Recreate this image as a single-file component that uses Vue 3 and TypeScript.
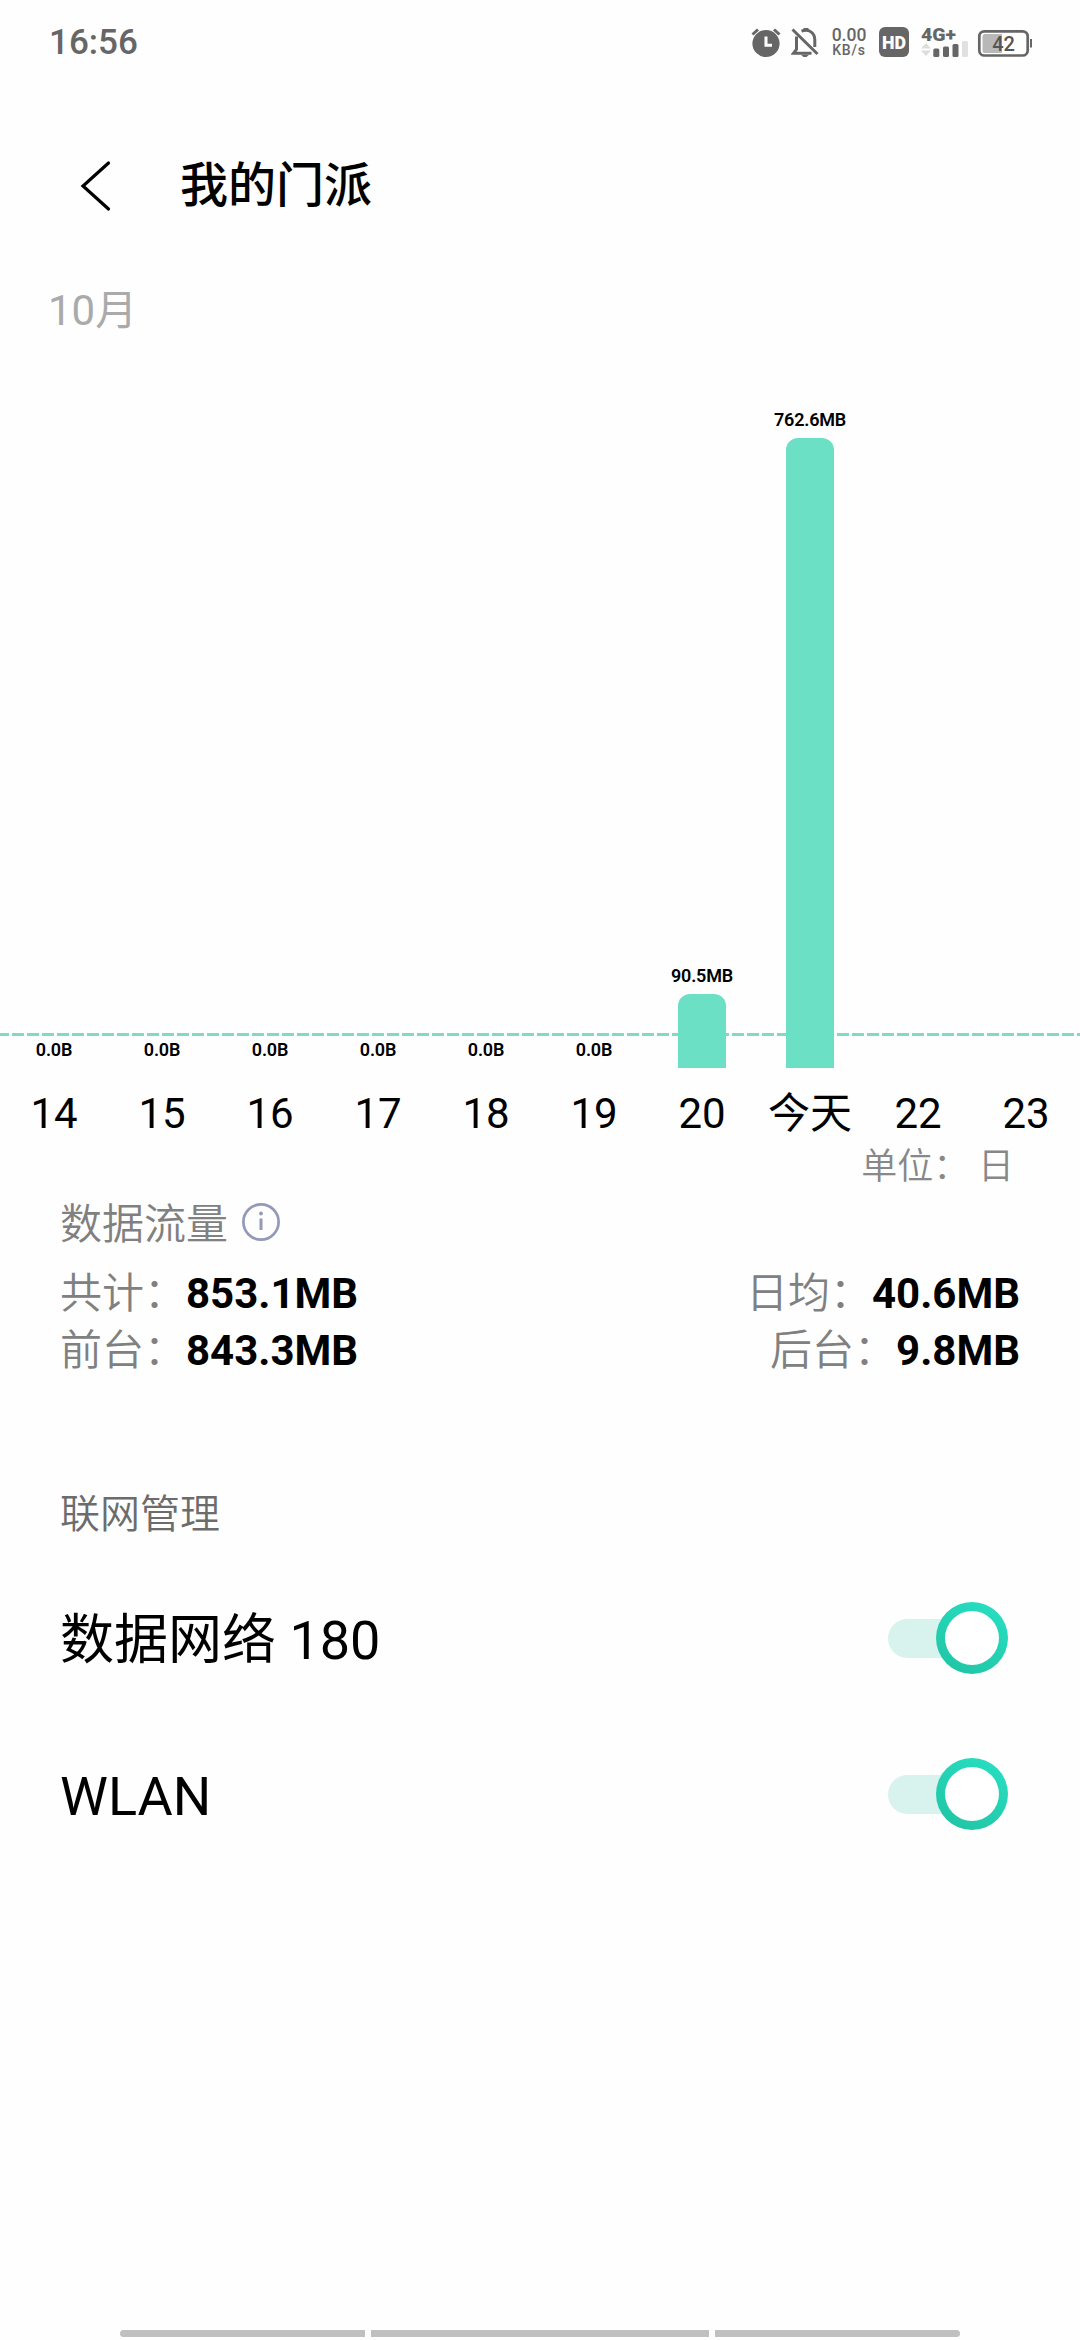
<script setup lang="ts">
import { ref } from 'vue'

interface DayUsage {
  label: string
  value: string
  height: number
}

interface NetworkSwitch {
  label: string
  on: boolean
}

const days: DayUsage[] = [
  { label: '14', value: '0.0B', height: 0 },
  { label: '15', value: '0.0B', height: 0 },
  { label: '16', value: '0.0B', height: 0 },
  { label: '17', value: '0.0B', height: 0 },
  { label: '18', value: '0.0B', height: 0 },
  { label: '19', value: '0.0B', height: 0 },
  { label: '20', value: '90.5MB', height: 74 },
  { label: '今天', value: '762.6MB', height: 630 },
  { label: '22', value: '', height: 0 },
  { label: '23', value: '', height: 0 },
]

const totals = [
  [
    { label: '共计：', value: '853.1MB' },
    { label: '日均：', value: '40.6MB' },
  ],
  [
    { label: '前台：', value: '843.3MB' },
    { label: '后台：', value: '9.8MB' },
  ],
]

const switches = ref<NetworkSwitch[]>([
  { label: '数据网络 180', on: true },
  { label: 'WLAN', on: true },
])
</script>

<template>
  <div class="screen">
    <div class="status">
      <span class="clock">16:56</span>
      <div class="indicators">
        <!-- alarm -->
        <svg class="alarm" width="30" height="40" viewBox="0 0 30 40">
          <circle cx="15" cy="21.5" r="13.6" fill="#666" />
          <path d="M1.5 12.5L7 7.5M28.5 12.5L23 7.5" stroke="#666" stroke-width="3" fill="none" />
          <path d="M15 14.5v8.7h6" stroke="#fff" stroke-width="3" fill="none" />
        </svg>
        <!-- muted bell -->
        <svg class="bell" width="30" height="40" viewBox="0 0 30 40">
          <path d="M5.500 14.500V27.300L2.500 31.200H20.500M10.500 9.200C18 6.300 23.800 11 23.800 18V25" stroke="#666" stroke-width="3" fill="none" />
          <path d="M12.500 8.500h5V6h-5z" fill="#666" />
          <path d="M1.500 7.500L26.500 32" stroke="#666" stroke-width="3" />
          <path d="M10 32.700h8l-2.500 2.300h-3z" fill="#666" />
        </svg>
        <div class="speed">
          <span class="rate">0.00</span>
          <span class="rate-unit">KB/s</span>
        </div>
        <!-- HD badge -->
        <svg class="hd" width="30" height="40" viewBox="0 0 30 40">
          <rect y="5" width="30" height="30" rx="6" fill="#666" />
          <text x="3" y="27" textLength="24" lengthAdjust="spacingAndGlyphs" class="hd-text">HD</text>
        </svg>
        <!-- mobile signal -->
        <svg class="signal" width="51" height="40" viewBox="0 0 51 40">
          <text x="2" y="19" textLength="35" lengthAdjust="spacingAndGlyphs" class="net">4G+</text>
          <path d="M2 26.500L7 21l5 5.500zM2 28.500h10L7 34z" fill="#ddd" />
          <g fill="#666">
            <rect x="14.300" y="26.500" width="6" height="8.500" rx="1.500" />
            <rect x="24" y="24.500" width="6" height="10.500" rx="1.500" />
            <rect x="33.500" y="22" width="6" height="13" rx="1.500" />
          </g>
          <rect x="43" y="19" width="6" height="16" rx="1.500" fill="#e0e0e0" />
        </svg>
        <!-- battery -->
        <svg class="battery" width="58" height="40" viewBox="0 0 58 40">
          <rect x="3.300" y="9.300" width="48.400" height="24.200" rx="5" fill="#fff" stroke="#666" stroke-width="2.700" />
          <path d="M9 12H26V31H9a2.500 2.500 0 0 1-2.500-2.500V14.500A2.500 2.500 0 0 1 9 12z" fill="#b8b8b8" />
          <rect x="54" y="17" width="2" height="8.500" fill="#666" />
          <text x="27.500" y="28.500" class="level">42</text>
        </svg>
      </div>
    </div>

    <header class="header">
      <svg class="back" width="34" height="56" viewBox="0 0 34 56">
        <path d="M30.500 5L5 28l25.500 23" fill="none" stroke="#000" stroke-width="3.200" stroke-linecap="round" />
      </svg>
      <h1 class="title">我的门派</h1>
    </header>

    <div class="month">10月</div>

    <div class="chart">
      <div class="average"></div>
      <div v-for="day in days" :key="day.label" class="column">
        <span class="value">{{ day.value }}</span>
        <div class="bar" :style="{ height: day.height + 'px' }"></div>
      </div>
    </div>
    <div class="axis">
      <span v-for="day in days" :key="day.label" class="tick">{{ day.label }}</span>
    </div>
    <div class="unit">单位： 日</div>

    <section class="usage">
      <div class="usage-title">
        <span>数据流量</span>
        <svg class="info" width="40" height="40" viewBox="0 0 40 40">
          <circle cx="20" cy="20" r="17.600" fill="none" stroke="#9499b8" stroke-width="2.700" />
          <path d="M20 16.500v11.500" stroke="#9499b8" stroke-width="3" />
          <circle cx="20" cy="11.500" r="1.900" fill="#9499b8" />
        </svg>
      </div>
      <div v-for="(row, i) in totals" :key="i" class="usage-row">
        <span v-for="item in row" :key="item.label" class="usage-item">{{ item.label }}<b>{{ item.value }}</b></span>
      </div>
    </section>

    <section class="network">
      <h2 class="network-title">联网管理</h2>
      <div v-for="item in switches" :key="item.label" class="network-row">
        <span class="network-label">{{ item.label }}</span>
        <div class="switch" role="switch" :aria-checked="item.on" @click="item.on = !item.on">
          <div class="track"></div>
          <div class="ring" :class="{ off: !item.on }"><div class="knob"></div></div>
        </div>
      </div>
    </section>

    <div class="gesture">
      <i class="side left"></i>
      <i class="middle"></i>
      <i class="side right"></i>
    </div>
  </div>
</template>

<style>
body {
  margin: 0;
  background: #fefefe;
}
</style>

<style scoped>
.screen {
  display: flex;
  flex-direction: column;
  width: 1080px;
  height: 2340px;
  overflow: hidden;
  background: #fefefe;
  color: #000;
  font-family: Roboto, "Noto Sans CJK SC", sans-serif;
}
.status {
  display: flex;
  justify-content: space-between;
  align-items: center;
  height: 84px;
  padding: 0 46px 0 49px;
  color: #666;
}
.clock {
  padding-top: 2px;
  font-size: 35px;
  font-weight: 500;
  line-height: 42px;
}
.indicators {
  display: flex;
  align-items: center;
}
.indicators svg {
  display: block;
}
.bell {
  margin-left: 10px;
}
.speed {
  display: flex;
  flex-direction: column;
  align-items: center;
  width: 38px;
  margin: 2px 11px 0 9px;
  font-weight: 500;
  white-space: nowrap;
}
.rate {
  font-size: 17.500px;
  line-height: 15px;
}
.rate-unit {
  font-size: 14px;
  line-height: 15px;
  letter-spacing: 0.8px;
}
.hd {
  margin-right: 10px;
}
.hd-text {
  fill: #fff;
  font-size: 19px;
  font-weight: 900;
}
.net {
  fill: #666;
  font-size: 19px;
  font-weight: 900;
}
.battery {
  margin-left: 6px;
}
.level {
  fill: #555;
  font-size: 20px;
  font-weight: 500;
  text-anchor: middle;
}
.header {
  display: flex;
  align-items: center;
  height: 203px;
  margin-bottom: 2px;
  padding-left: 78px;
}
.title {
  margin: 0 0 0 68px;
  font-size: 48px;
  font-weight: 500;
  line-height: 60px;
}
.month {
  padding-left: 48px;
  color: #aaa;
  font-size: 42px;
  line-height: 44px;
}
.chart {
  position: relative;
  display: flex;
  align-items: flex-end;
  height: 735px;
}
.average {
  position: absolute;
  left: 0;
  right: 0;
  bottom: 32px;
  height: 3px;
  background: repeating-linear-gradient(90deg, #7edcc4 0 12px, transparent 12px 15px) -3px 0;
  background-size: 1095px 3px;
}
.column {
  position: relative;
  display: flex;
  flex: 1;
  flex-direction: column;
  align-items: center;
}
.value {
  margin-bottom: 8px;
  font-size: 18px;
  font-weight: 600;
  line-height: 20px;
  letter-spacing: -0.2px;
}
.bar {
  width: 48px;
  border-radius: 12px 12px 0 0;
  background: #6be0c5;
}
.axis {
  display: flex;
  margin-top: 21px;
  font-size: 42px;
  line-height: 50px;
}
.tick {
  flex: 1;
  text-align: center;
}
.unit {
  margin-top: 8px;
  padding-right: 66px;
  color: #888;
  font-size: 36px;
  font-weight: 350;
  line-height: 40px;
  text-align: right;
}
.usage {
  padding: 10px 60px 0;
  color: #808080;
  font-size: 42px;
  font-weight: 350;
}
.usage-title {
  display: flex;
  align-items: center;
  height: 56px;
  margin-bottom: 12px;
  line-height: 56px;
}
.info {
  margin: -6px 0 0 13px;
}
.usage-row {
  display: flex;
  justify-content: space-between;
  line-height: 57px;
}
.usage-item b {
  color: #000;
  font-weight: 700;
}
.network {
  padding: 106px 60px 0;
}
.network-title {
  margin: 0 0 15px;
  color: #6c6c6c;
  font-size: 40px;
  font-weight: 350;
  line-height: 60px;
}
.network-row {
  display: flex;
  align-items: center;
  justify-content: space-between;
  height: 156px;
  font-size: 54px;
}
.network-label {
  padding-top: 5px;
  line-height: 64px;
}
.switch {
  display: flex;
  align-items: center;
  width: 120px;
  margin-right: 12px;
}
.track {
  width: 84px;
  height: 39px;
  border-radius: 20px;
  background: #d8f2ed;
}
.ring {
  box-sizing: border-box;
  flex: none;
  width: 72px;
  height: 72px;
  margin-left: -36px;
  padding: 9px;
  border-radius: 50%;
  background: linear-gradient(30deg, #1fc3a2, #28e0c4);
}
.ring.off {
  background: #ccc;
}
.knob {
  height: 100%;
  border-radius: 50%;
  background: #fff;
}
.gesture {
  display: flex;
  gap: 6px;
  margin: auto 120px 3px;
}
.gesture i {
  height: 7px;
  background: #c0c0c0;
}
.side {
  width: 245px;
}
.middle {
  flex: 1;
}
.left {
  border-radius: 4px 0 0 4px;
}
.right {
  border-radius: 0 4px 4px 0;
}
</style>
